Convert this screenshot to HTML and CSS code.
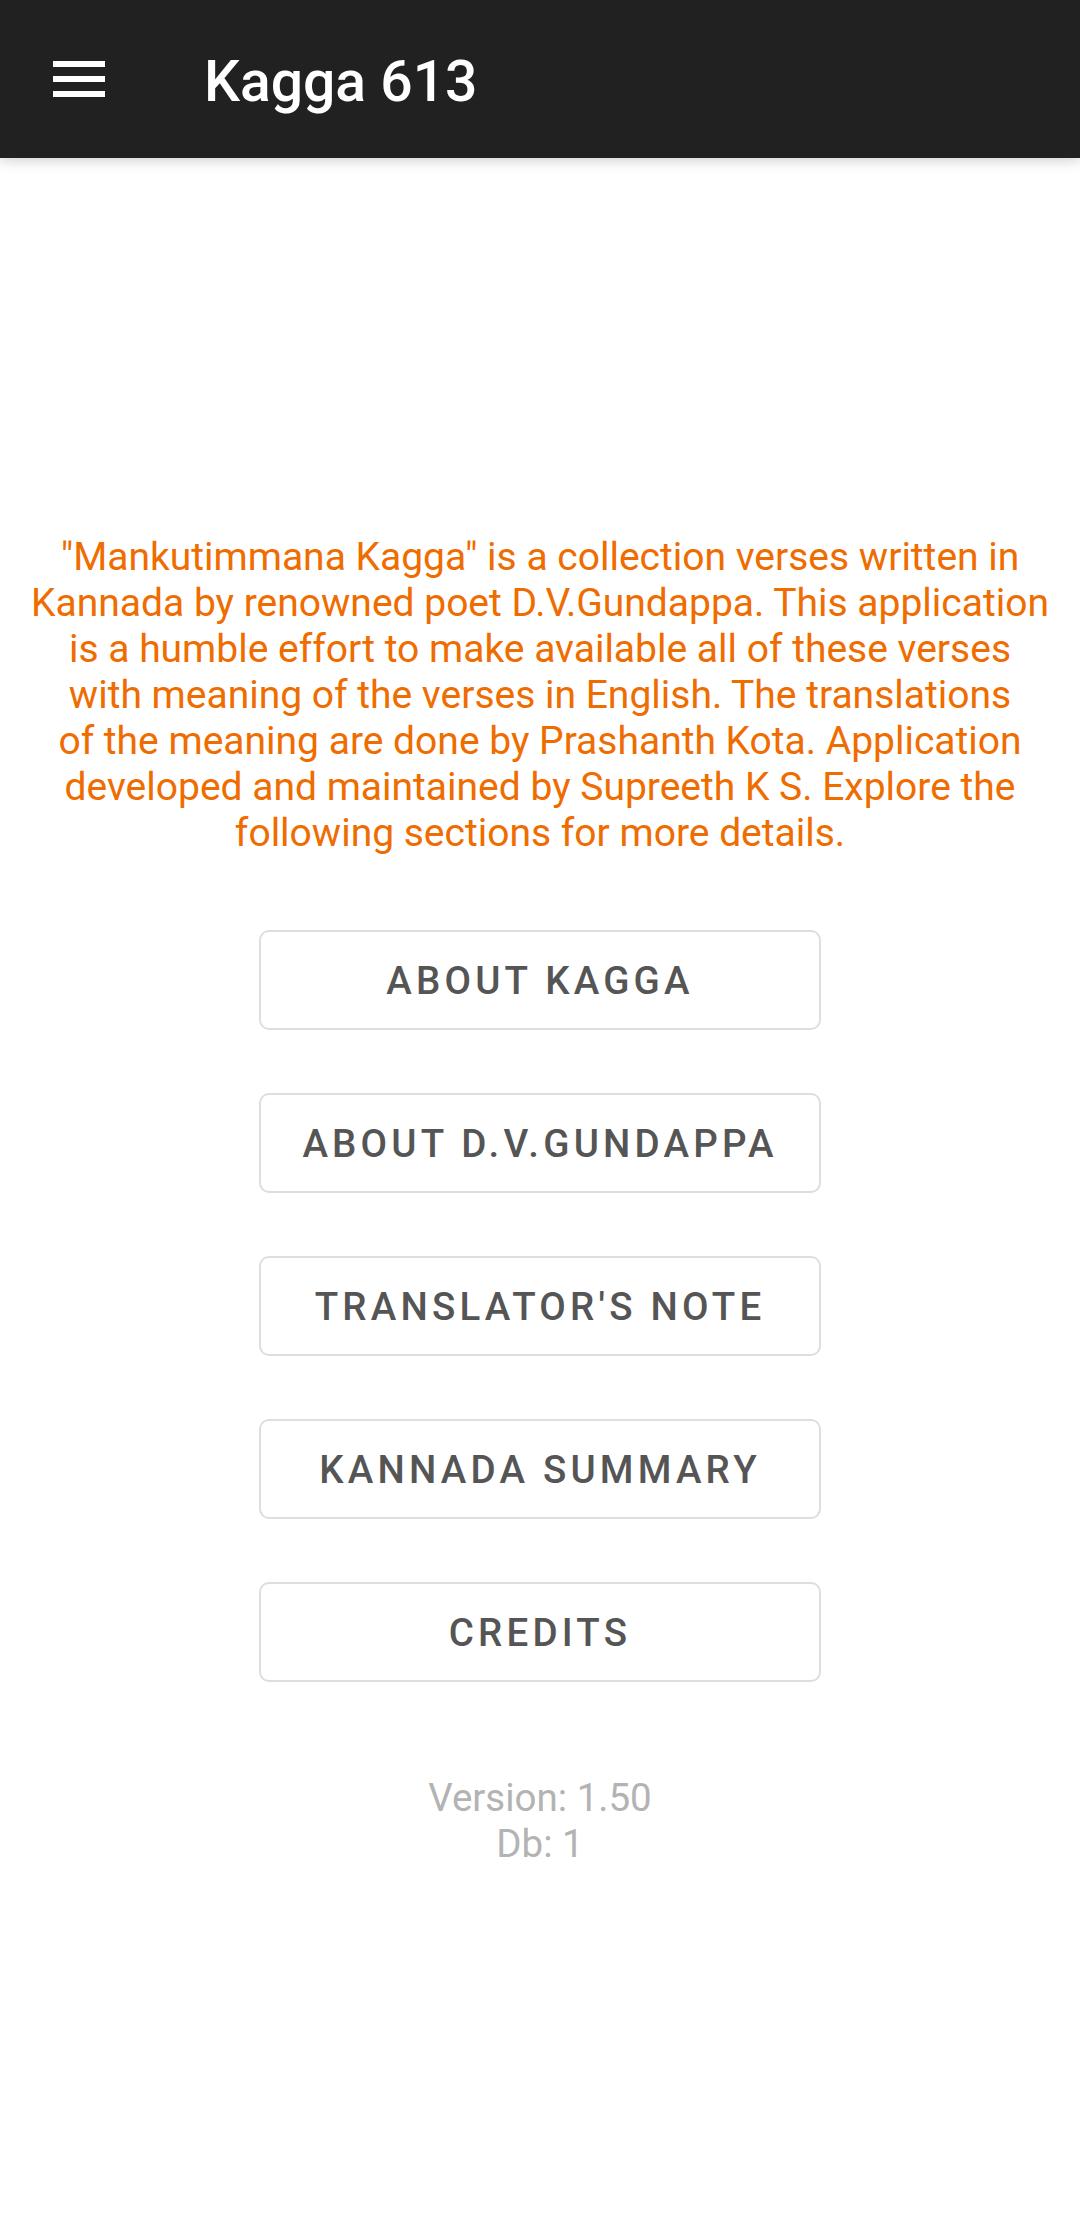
FILE: index.html
```html
<!DOCTYPE html>
<html lang="en">
<head>
<meta charset="utf-8">
<title>Kagga 613</title>
<link rel="stylesheet" href="styles.css">
</head>
<body>
<header class="appbar">
  <button class="menu-btn" aria-label="Menu">
    <svg width="52" height="36" viewBox="0 0 52 36"><rect x="0" y="0" width="52" height="6" fill="#fff"/><rect x="0" y="15" width="52" height="6" fill="#fff"/><rect x="0" y="30" width="52" height="6" fill="#fff"/></svg>
  </button>
  <h1 class="title">Kagga 613</h1>
</header>
<main class="content">
  <div class="ad-space"></div>
  <p class="intro">"Mankutimmana Kagga" is a collection verses written in<br>Kannada by renowned poet D.V.Gundappa. This application<br>is a humble effort to make available all of these verses<br>with meaning of the verses in English. The translations<br>of the meaning are done by Prashanth Kota. Application<br>developed and maintained by Supreeth K S. Explore the<br>following sections for more details.</p>
  <nav class="buttons">
    <button class="outline-btn">About Kagga</button>
    <button class="outline-btn">About D.V.Gundappa</button>
    <button class="outline-btn">Translator's Note</button>
    <button class="outline-btn">Kannada Summary</button>
    <button class="outline-btn">Credits</button>
  </nav>
  <div class="version">
    <div>Version: 1.50</div>
    <div>Db: 1</div>
  </div>
</main>
</body>
</html>
```

FILE: styles.css
```css
* { box-sizing: border-box; }
html, body {
  margin: 0;
  padding: 0;
  background: #ffffff;
  font-family: Roboto, "Noto Sans", sans-serif;
}
.appbar {
  height: 158px;
  background: #212121;
  display: flex;
  align-items: center;
  box-shadow: 0 3px 12px rgba(0,0,0,0.18);
  position: relative;
  z-index: 1;
}
.menu-btn {
  margin: 0 0 0 53px;
  padding: 0;
  border: 0;
  background: transparent;
  width: 52px;
  height: 36px;
  display: flex;
}
.title {
  margin: 0 0 0 99px;
  color: #ffffff;
  font-size: 57px;
  font-weight: 500;
  line-height: 1;
  padding-top: 4px;
}
.content {
  display: flex;
  flex-direction: column;
  align-items: center;
}
.ad-space {
  height: 376px;
}
.intro {
  margin: 0;
  padding: 0 20px;
  width: 100%;
  text-align: center;
  color: #EF6C00;
  font-size: 39px;
  line-height: 46px;
  white-space: nowrap;
}
.buttons {
  margin-top: 74px;
  display: flex;
  flex-direction: column;
  gap: 63px;
}
.outline-btn {
  width: 562px;
  height: 100px;
  border: 2px solid #dedede;
  border-radius: 10px;
  background: #fff;
  color: #555555;
  font-family: Roboto, "Noto Sans", sans-serif;
  font-size: 38.5px;
  font-weight: 500;
  text-transform: uppercase;
  letter-spacing: 4.2px;
  padding: 0;
}
.version {
  margin-top: 93px;
  text-align: center;
  color: #b3b3b3;
  font-size: 38.5px;
  line-height: 45.5px;
}
```
